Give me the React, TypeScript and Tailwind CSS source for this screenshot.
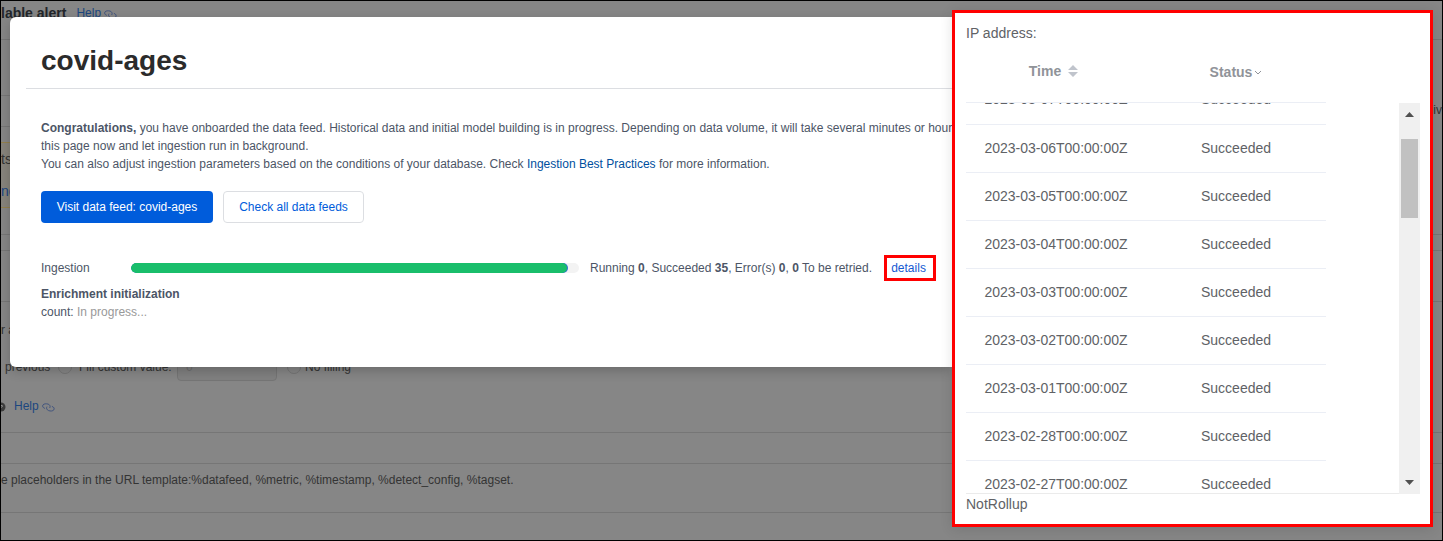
import type { ReactNode } from "react";

const rows = [
  "2023-03-07T00:00:00Z",
  "2023-03-06T00:00:00Z",
  "2023-03-05T00:00:00Z",
  "2023-03-04T00:00:00Z",
  "2023-03-03T00:00:00Z",
  "2023-03-02T00:00:00Z",
  "2023-03-01T00:00:00Z",
  "2023-02-28T00:00:00Z",
  "2023-02-27T00:00:00Z",
];

function HelpLink() {
  return (
    <a href="#help" className="flex items-center gap-[3px] text-[#1c4680]">
      Help
      <svg className="mt-[2px]" width="13" height="9" viewBox="0 0 13 9" fill="none" stroke="#42557f" strokeWidth="1">
        <path d="M7.700 5C8.700 3.600 8 1.700 6.100 1.100 4.200.5 1.900.7 1 1.900.1 3.200.9 4.900 2.900 5.400" />
        <path d="M5 3.600C4 5 4.700 6.900 6.600 7.600 8.500 8.300 10.900 8.100 11.800 6.900 12.700 5.600 11.900 3.900 9.900 3.400" />
      </svg>
    </a>
  );
}

function Band({ className, children }: { className: string; children?: ReactNode }) {
  return <div className={"shrink-0 border-b border-[#767676] " + className}>{children}</div>;
}

function Backdrop() {
  return (
    <div className="flex flex-col overflow-hidden whitespace-nowrap text-xs text-[#343434]">
      <Band className="h-[39px] pt-1">
        <div className="flex items-center gap-[10px]">
          <strong className="text-sm leading-4 text-[#23262b]">lable alert</strong>
          <HelpLink />
        </div>
      </Band>
      <Band className="h-14 w-2/3" />
      <div className="flex h-[31px] justify-between">
        <Band className="h-[31px] w-2/3" />
        <span className="pt-[6px]">iv</span>
      </div>
      <div className="mt-[15px] flex h-[66px] w-2/3 flex-col justify-around border-y border-[#93804e] bg-[#87847c] text-sm">
        <span>ts</span>
        <a href="#learn" className="text-[#1c4680]">nd</a>
      </div>
      <Band className="h-[27px]" />
      <Band className="h-4" />
      <Band className="h-[51px]" />
      <Band className="h-[131px] pt-5">
        <p>r a</p>
        <div className="mt-[13px] flex h-8 items-center">
          <label className="w-[57px] pl-1">previous</label>
          <label className="flex w-[119px] items-center gap-[7px]">
            <input type="radio" name="fill" className="size-3.5 appearance-none rounded-full border border-[#757575]" />
            Fill custom value:
          </label>
          <input
            aria-label="Custom value"
            defaultValue="0"
            className="h-7 w-[100px] rounded-sm border border-[#757575] bg-[#808080] px-2 text-[#6c6c6c]"
          />
          <label className="ml-[10px] flex items-center gap-1">
            <input type="radio" name="fill" className="size-3.5 appearance-none rounded-full border border-[#757575]" />
            No filling
          </label>
        </div>
        <div className="mt-[15px] flex h-4 items-center gap-2">
          <svg className="mt-[2px]" width="5" height="10" viewBox="0 0 5 10">
            <circle cx="0" cy="5" r="4.500" fill="#3c3c3c" />
            <path d="M0 3.500c2-.5 2 1 0 2" stroke="#999" fill="none" />
          </svg>
          <HelpLink />
        </div>
      </Band>
      <Band className="h-[31px]" />
      <Band className="h-[49px] pt-2">
        e placeholders in the URL template:%datafeed, %metric, %timestamp, %detect_config, %tagset.
      </Band>
    </div>
  );
}

function FeedDialog() {
  return (
    <section className="mt-4 h-[350px] min-w-0 flex-1 overflow-hidden rounded-l-md bg-white pl-4 text-xs leading-[18px] whitespace-nowrap text-[#4c5566] shadow-[0_4px_12px_rgba(0,0,0,0.2)]">
      <h1 className="border-b border-[#dcdee2] pt-[25px] pb-[9px] pl-[15px] text-[28px] leading-[37px] font-bold text-[#2b2b2b]">
        covid-ages
      </h1>
      <div className="pl-[15px]">
        <div className="pt-[30px]">
          <p>
            <strong>Congratulations,</strong> you have onboarded the data feed. Historical data and initial model
            building is in progress. Depending on data volume, it will take several minutes or hour
          </p>
          <p>this page now and let ingestion run in background.</p>
          <p>
            You can also adjust ingestion parameters based on the conditions of your database. Check{" "}
            <a href="#practices" className="text-[#004f9e]">Ingestion Best Practices</a> for more information.
          </p>
        </div>
        <div className="mt-[18px] flex gap-[10px]">
          <button className="h-8 w-[172px] rounded bg-[#005cdb] text-white">Visit data feed: covid-ages</button>
          <button className="h-8 w-[141px] rounded border border-[#dcdee2] text-[#005cdb]">Check all data feeds</button>
        </div>
        <div className="mt-8 flex h-[26px] items-center">
          <span className="w-[90px]">Ingestion</span>
          <div className="h-[10px] w-[448px] overflow-hidden rounded-full bg-[#f3f3f3]">
            <div className="h-full w-[437px] rounded-full bg-[#2d6fd2]">
              <div className="h-full w-[436px] rounded-full bg-[#19be6b]" />
            </div>
          </div>
          <p className="ml-[11px]">
            Running <b>0</b>, Succeeded <b>35</b>, Error(s) <b>0</b>, <b>0</b> To be retried.
          </p>
          <button className="ml-3 h-[26px] w-[52px] border-[3px] border-[#ff0000] pr-[3px] text-[#1459d2]">details</button>
        </div>
        <p className="mt-1 font-bold">Enrichment initialization</p>
        <p>
          count: <span className="text-[#999]">In progress...</span>
        </p>
      </div>
    </section>
  );
}

function Columns() {
  return (
    <colgroup>
      <col className="w-[180px]" />
      <col className="w-[180px]" />
    </colgroup>
  );
}

function DetailsPopover() {
  return (
    <aside className="mt-[9px] flex h-[517px] w-[481px] shrink-0 flex-col border-[3px] border-[#ff0000] bg-white pt-[10px] pr-[10px] pl-[11px] text-sm leading-5 text-[#606266] shadow-[0_2px_12px_rgba(0,0,0,0.12)]">
      <p>IP address:</p>
      <table className="w-[360px] table-fixed border-collapse">
        <Columns />
        <thead>
          <tr className="h-[59px] border-b border-[#ebeef5] text-[#909399]">
            <th className="pr-1 pb-[2px]">
              <span className="inline-flex items-center">
                Time
                <svg className="ml-[6px]" width="12" height="12" viewBox="0 0 12 12" fill="#c0c4cc">
                  <path d="M1 5 6 0 11 5zM1 7h10L6 12z" />
                </svg>
              </span>
            </th>
            <th>
              <span className="inline-flex items-center">
                Status
                <svg className="ml-[2px]" width="8" height="8" viewBox="0 0 8 8" fill="none" stroke="#909399">
                  <path d="m1 3 3 3 3-3" />
                </svg>
              </span>
            </th>
          </tr>
        </thead>
      </table>
      <div className="flex h-[391px] justify-between overflow-hidden">
        <div className="flex-1 overflow-hidden border-b border-[#ebebeb]">
          <table className="-mt-[26px] w-[360px] table-fixed border-collapse text-center">
            <Columns />
            <tbody>
              {rows.map((time) => (
                <tr key={time} className="h-12 border-b border-[#ebeef5]">
                  <td className="pb-[2px]">{time}</td>
                  <td className="pb-[2px]">Succeeded</td>
                </tr>
              ))}
            </tbody>
          </table>
        </div>
        <div className="flex w-[21px] flex-col items-center justify-between bg-[#f0f0f0] py-[9px]">
          <div className="flex flex-col items-center gap-[22px]">
            <svg width="9" height="5" viewBox="0 0 9 5" fill="#505050">
              <path d="M0 5 4.500 0 9 5z" />
            </svg>
            <div className="h-[79px] w-[17px] bg-[#c1c1c1]" />
          </div>
          <svg width="9" height="5" viewBox="0 0 9 5" fill="#505050">
            <path d="M0 0h9L4.500 5z" />
          </svg>
        </div>
      </div>
      <p>NotRollup</p>
    </aside>
  );
}

export default function App() {
  return (
    <main className="relative min-h-screen border border-black bg-[#868686] font-['Liberation_Sans',Arial,sans-serif]">
      <Backdrop />
      <div className="absolute inset-0 flex pr-[9px] pl-[9px]">
        <FeedDialog />
        <DetailsPopover />
      </div>
    </main>
  );
}
